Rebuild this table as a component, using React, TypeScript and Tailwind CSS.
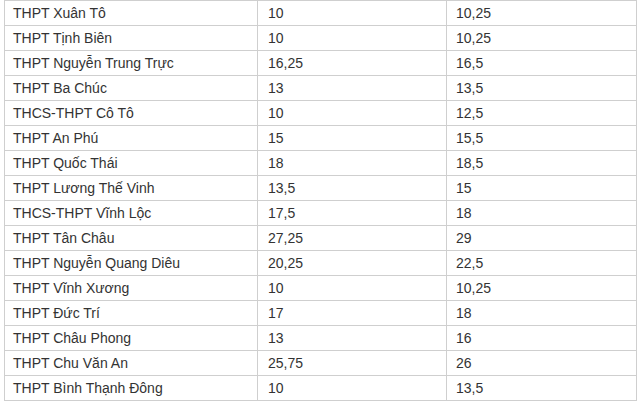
const rows: [string, string, string][] = [
  ["THPT Xuân Tô", "10", "10,25"],
  ["THPT Tịnh Biên", "10", "10,25"],
  ["THPT Nguyễn Trung Trực", "16,25", "16,5"],
  ["THPT Ba Chúc", "13", "13,5"],
  ["THCS-THPT Cô Tô", "10", "12,5"],
  ["THPT An Phú", "15", "15,5"],
  ["THPT Quốc Thái", "18", "18,5"],
  ["THPT Lương Thế Vinh", "13,5", "15"],
  ["THCS-THPT Vĩnh Lộc", "17,5", "18"],
  ["THPT Tân Châu", "27,25", "29"],
  ["THPT Nguyễn Quang Diêu", "20,25", "22,5"],
  ["THPT Vĩnh Xương", "10", "10,25"],
  ["THPT Đức Trí", "17", "18"],
  ["THPT Châu Phong", "13", "16"],
  ["THPT Chu Văn An", "25,75", "26"],
  ["THPT Bình Thạnh Đông", "10", "13,5"],
];

export default function App() {
  return (
    <div className="w-[639px] h-[402px] bg-white overflow-hidden font-['Liberation_Sans',Arial,sans-serif] text-[14px] text-[#333]">
      <div className="ml-[4px] w-[633px] border-l border-t border-[#cfcfcf]">
        {rows.map(([name, a, b]) => (
          <div key={name} className="flex h-[25px]">
            <div className="w-[253px] border-r border-b border-[#cfcfcf] pl-[8px] flex items-center">
              {name}
            </div>
            <div className="w-[189px] border-r border-b border-[#cfcfcf] pl-[10px] flex items-center">
              {a}
            </div>
            <div className="w-[190px] border-r border-b border-[#cfcfcf] pl-[9px] flex items-center">
              {b}
            </div>
          </div>
        ))}
      </div>
    </div>
  );
}
